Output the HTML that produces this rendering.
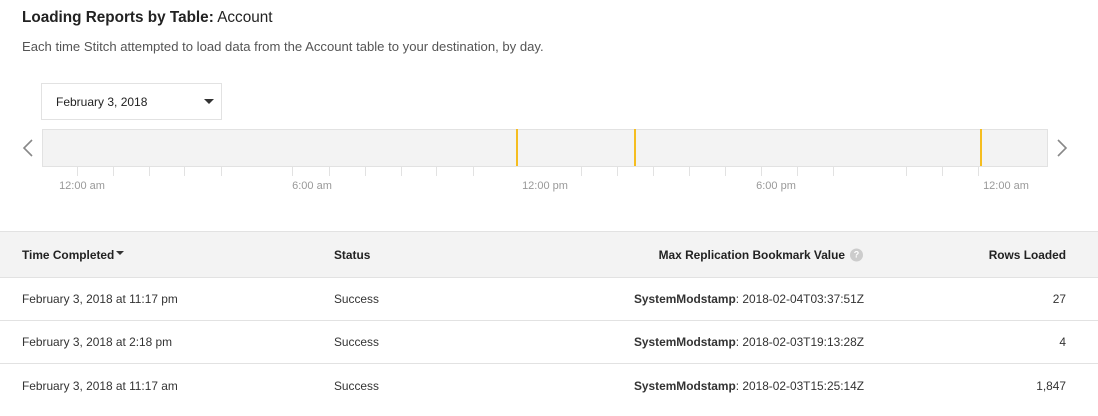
<!DOCTYPE html>
<html><head><meta charset="utf-8"><style>
*{margin:0;padding:0;box-sizing:border-box}
body{width:1098px;height:416px;background:#fff;font-family:"Liberation Sans",sans-serif;color:#333;position:relative;overflow:hidden}
.a{position:absolute;white-space:nowrap}
.tick{position:absolute;top:166px;width:1px;height:10px;background:#e2e2e2}
.lbl{position:absolute;top:180px;font-size:11px;color:#999;transform:translateX(-50%)}
.yl{position:absolute;top:129px;width:2px;height:37px;background:#f5bd1f}
.row{position:absolute;left:0;width:1098px;border-bottom:1px solid #e2e2e2;font-size:11.9px}
.row span{position:absolute;top:50%;transform:translateY(-50%)}
</style></head><body>
<div class="a" style="left:22px;top:9px;font-size:15.3px;color:#222"><b>Loading Reports by Table:</b> Account</div>
<div class="a" style="left:22px;top:39px;font-size:13.1px;color:#555">Each time Stitch attempted to load data from the Account table to your destination, by day.</div>
<div class="a" style="left:41px;top:83px;width:181px;height:37px;border:1px solid #e2e2e2;font-size:12px;color:#222;padding:11px 0 0 14px">February 3, 2018
<svg style="position:absolute;left:162px;top:15px" width="10" height="6"><path d="M0 0L10 0L5 5Z" fill="#333"/></svg></div>
<svg class="a" style="left:22px;top:139px" width="12" height="20"><path d="M10 1L2 9L10 17" stroke="#888" stroke-width="1.6" fill="none"/></svg>
<svg class="a" style="left:1056px;top:139px" width="12" height="20"><path d="M2 1L10 9L2 17" stroke="#888" stroke-width="1.6" fill="none"/></svg>
<div class="a" style="left:42px;top:129px;width:1006px;height:38px;background:#f3f3f3;border:1px solid #e2e2e2"></div>
<div class="yl" style="left:516px"></div><div class="yl" style="left:634px"></div><div class="yl" style="left:980px"></div>
<div class="tick" style="left:77px"></div><div class="tick" style="left:113px"></div><div class="tick" style="left:149px"></div><div class="tick" style="left:184px"></div><div class="tick" style="left:221px"></div><div class="tick" style="left:292px"></div><div class="tick" style="left:329px"></div><div class="tick" style="left:365px"></div><div class="tick" style="left:401px"></div><div class="tick" style="left:436px"></div><div class="tick" style="left:473px"></div><div class="tick" style="left:581px"></div><div class="tick" style="left:617px"></div><div class="tick" style="left:653px"></div><div class="tick" style="left:689px"></div><div class="tick" style="left:725px"></div><div class="tick" style="left:761px"></div><div class="tick" style="left:797px"></div><div class="tick" style="left:833px"></div><div class="tick" style="left:906px"></div><div class="tick" style="left:942px"></div><div class="tick" style="left:978px"></div>
<div class="lbl" style="left:82px">12:00 am</div><div class="lbl" style="left:312px">6:00 am</div><div class="lbl" style="left:545px">12:00 pm</div><div class="lbl" style="left:776px">6:00 pm</div><div class="lbl" style="left:1006px">12:00 am</div>
<div class="row" style="top:231px;height:47px;background:#f3f3f3;border-top:1px solid #e2e2e2;font-weight:bold;color:#222">
<span style="left:22px">Time Completed<svg width="9" height="6" style="margin-left:2px;vertical-align:2px"><path d="M0 0L8 0L4 4Z" fill="#333"/></svg></span>
<span style="left:334px">Status</span>
<span style="right:253px">Max Replication Bookmark Value</span>
<span style="left:850px;width:13px;height:13px;border-radius:50%;background:#ccc;color:#fff;font-size:9px;text-align:center;line-height:13px">?</span>
<span style="right:32px">Rows Loaded</span></div>
<div class="row" style="top:278px;height:43px"><span style="left:22px">February 3, 2018 at 11:17 pm</span><span style="left:334px">Success</span><span style="right:234px"><b>SystemModstamp</b>: 2018-02-04T03:37:51Z</span><span style="right:32px">27</span></div>
<div class="row" style="top:321px;height:43px"><span style="left:22px">February 3, 2018 at 2:18 pm</span><span style="left:334px">Success</span><span style="right:234px"><b>SystemModstamp</b>: 2018-02-03T19:13:28Z</span><span style="right:32px">4</span></div>
<div class="row" style="top:364px;height:43px;border-bottom:none"><span style="left:22px">February 3, 2018 at 11:17 am</span><span style="left:334px">Success</span><span style="right:234px"><b>SystemModstamp</b>: 2018-02-03T15:25:14Z</span><span style="right:32px">1,847</span></div>
</body></html>
